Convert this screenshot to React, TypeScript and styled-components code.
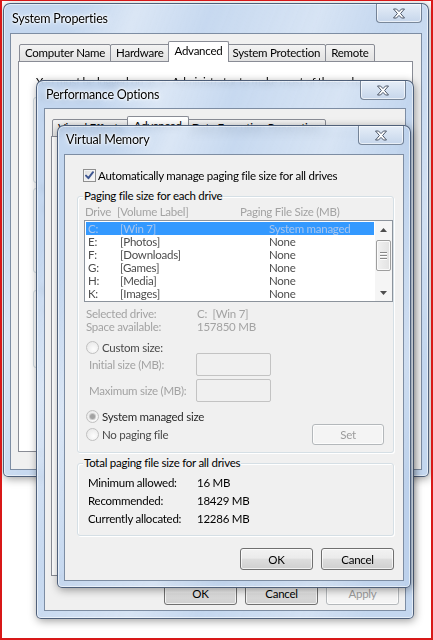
import React from "react";
import styled, { createGlobalStyle, css } from "styled-components";

const GlobalStyle = createGlobalStyle`
  html, body { margin: 0; padding: 0; background: #fff; }
  body {
    font-family: Lato, "Liberation Sans", Arial, sans-serif;
    font-size: 11.5px;
    letter-spacing: -0.25px;
    color: #000;
  }
  * { box-sizing: border-box; }
`;

const Desktop = styled.div`
  position: relative;
  width: 433px;
  height: 640px;
  overflow: hidden;
  background: #fff;
  border: 2px solid #d81818;
  border-top-width: 1px;
`;

/* ---------- window chrome ---------- */

const Frame = styled.div<{ $x: number; $y: number; $w: number; $h: number; $px: number }>`
  position: absolute;
  left: ${(p) => p.$x}px;
  top: ${(p) => p.$y}px;
  width: ${(p) => p.$w}px;
  height: ${(p) => p.$h}px;
  display: flex;
  flex-direction: column;
  padding: 0 ${(p) => p.$px}px ${(p) => p.$px}px;
  border: 1px solid rgba(50, 66, 92, 0.8);
  border-radius: 7px 7px 5px 5px;
  background:
    linear-gradient(112deg,
      rgba(255, 255, 255, 0) 12%,
      rgba(255, 255, 255, 0.38) 22%,
      rgba(255, 255, 255, 0.05) 34%,
      rgba(255, 255, 255, 0.32) 52%,
      rgba(255, 255, 255, 0) 64%,
      rgba(255, 255, 255, 0.25) 82%,
      rgba(255, 255, 255, 0) 92%),
    rgba(186, 208, 236, 0.86);
  backdrop-filter: blur(3px);
  box-shadow:
    inset 0 0 0 1px rgba(255, 255, 255, 0.55),
    1px 2px 8px rgba(0, 0, 0, 0.38);
`;

const TitleBar = styled.div<{ $h: number }>`
  flex: none;
  height: ${(p) => p.$h}px;
  display: flex;
  justify-content: space-between;
  align-items: flex-start;
`;

const Title = styled.span<{ $h: number }>`
  padding-left: 2px;
  line-height: ${(p) => p.$h}px;
  font-size: 12.5px;
  letter-spacing: -0.2px;
  color: #000;
  text-shadow: 0 0 6px #fff, 0 0 3px #fff, 0 0 2px #fff;
`;

const CloseButton = styled.div`
  width: 46px;
  height: 19px;
  display: flex;
  align-items: center;
  justify-content: center;
  border: 1px solid rgba(64, 80, 104, 0.65);
  border-top: none;
  border-radius: 0 0 4px 4px;
  background: linear-gradient(#e6eef8, #c6d6eb);
  box-shadow: inset 0 0 0 1px rgba(255, 255, 255, 0.6);
`;

const Client = styled.div<{ $pad: string }>`
  flex: 1;
  min-height: 0;
  display: flex;
  flex-direction: column;
  padding: ${(p) => p.$pad};
  background: #f0f0f0;
  border: 1px solid #7d8da3;
`;

const CloseGlyph = () => (
  <svg width="14" height="11" viewBox="0 0 14 11">
    <path
      d="M1.5 1 L4.5 1 L7 3.6 L9.5 1 L12.5 1 L8.6 5.5 L12.5 10 L9.5 10 L7 7.4 L4.5 10 L1.5 10 L5.4 5.5 Z"
      fill="#fff"
      stroke="#4b5668"
      strokeWidth="1"
      strokeLinejoin="round"
    />
  </svg>
);

type WinProps = {
  title: string;
  x: number;
  y: number;
  w: number;
  h: number;
  titleH: number;
  px: number;
  pad: string;
  children: React.ReactNode;
};

const Window = ({ title, x, y, w, h, titleH, px, pad, children }: WinProps) => (
  <Frame $x={x} $y={y} $w={w} $h={h} $px={px}>
    <TitleBar $h={titleH}>
      <Title $h={titleH}>{title}</Title>
      <CloseButton>
        <CloseGlyph />
      </CloseButton>
    </TitleBar>
    <Client $pad={pad}>{children}</Client>
  </Frame>
);

/* ---------- tabs ---------- */

const TabStrip = styled.div`
  position: relative;
  z-index: 1;
  flex: none;
  height: 20px;
  margin-bottom: -1px;
  padding-left: 2px;
  display: flex;
  align-items: flex-end;
`;

const Tab = styled.div<{ $active?: boolean }>`
  position: relative;
  height: 18px;
  padding: 0 5px;
  margin-left: -1px;
  line-height: 16px;
  white-space: nowrap;
  border: 1px solid #898c95;
  border-radius: 2px 2px 0 0;
  background: linear-gradient(#f3f3f3, #e2e2e2);
  ${(p) =>
    p.$active &&
    css`
      z-index: 2;
      height: 21px;
      margin: 0 -2px 0 -2px;
      padding: 0 6px;
      line-height: 17px;
      border-bottom: none;
      background: #fff;
    `}
`;

const TabPanel = styled.div`
  flex: 1;
  min-height: 0;
  display: flex;
  flex-direction: column;
  background: #fff;
  border: 1px solid #898c95;
  overflow: hidden;
`;

/* ---------- buttons ---------- */

const PushButton = styled.div<{ $w: number; $h: number; $disabled?: boolean }>`
  flex: none;
  width: ${(p) => p.$w}px;
  height: ${(p) => p.$h}px;
  display: flex;
  align-items: center;
  justify-content: center;
  border: 1px solid #707070;
  border-radius: 3px;
  color: #000;
  background: linear-gradient(#f2f2f2 0%, #ebebeb 45%, #dddddd 52%, #cfcfcf 100%);
  box-shadow: inset 0 0 0 1px rgba(255, 255, 255, 0.7);
  ${(p) =>
    p.$disabled &&
    css`
      border-color: #b4b8bb;
      color: #9c9c9c;
      background: #f4f4f4;
      box-shadow: inset 0 0 0 1px #fcfcfc;
    `}
`;

const ButtonRow = styled.div<{ $mt: number; $pr: number }>`
  flex: none;
  display: flex;
  justify-content: flex-end;
  gap: 8px;
  margin-top: ${(p) => p.$mt}px;
  padding-right: ${(p) => p.$pr}px;
`;

/* ---------- group boxes ---------- */

const GroupBox = styled.div<{ $mt: number; $h?: number; $pad: string }>`
  position: relative;
  flex: none;
  margin-top: ${(p) => p.$mt}px;
  ${(p) => (p.$h ? `height: ${p.$h}px;` : "")}
  padding: ${(p) => p.$pad};
  border: 1px solid #d5dfe5;
  border-radius: 3px;
  box-shadow: inset 1px 1px 0 #fff, 1px 1px 0 #fff;
`;

const GroupLabel = styled.span<{ $bg: string }>`
  position: absolute;
  top: -9px;
  left: 5px;
  padding: 0 1px;
  line-height: 15px;
  white-space: nowrap;
  background: ${(p) => p.$bg};
  color: #000;
`;

/* ---------- System Properties contents ---------- */

const SysBody = styled.div`
  display: flex;
  flex-direction: column;
  padding: 12px 8px 0 14px;
`;

const Note = styled.div`
  margin: 0 -6px 0 3px;
  line-height: 15px;
  white-space: nowrap;
  letter-spacing: -0.35px;
`;

const GroupText = styled.div`
  line-height: 15px;
`;

const GroupFoot = styled.div`
  display: flex;
  justify-content: flex-end;
  margin-top: 14px;
`;

/* ---------- Virtual Memory contents ---------- */

const CheckRow = styled.div`
  flex: none;
  display: flex;
  align-items: center;
  gap: 2px;
  height: 15px;
  margin: 13px 0 0 6px;
  line-height: 15px;
  white-space: nowrap;
`;

const CheckBox = styled.span`
  flex: none;
  width: 13px;
  height: 13px;
  display: flex;
  align-items: center;
  justify-content: center;
  border: 1px solid #8f8f8f;
  background: linear-gradient(135deg, #dcdcdc, #fbfbfb);
  box-shadow: inset 0 0 0 1px #f4f4f4;
`;

const ColumnHeader = styled.div`
  display: grid;
  grid-template-columns: 32px 123px auto;
  justify-items: start;
  height: 15px;
  margin-top: 7px;
  padding-left: 7px;
  line-height: 15px;
  color: #a3a3a3;
  white-space: nowrap;
`;

const ListBox = styled.div`
  display: flex;
  height: 82px;
  margin: 1px 0 0 6px;
  border: 1px solid #8c939c;
  background: #fff;
`;

const ListRows = styled.div`
  flex: 1;
  padding: 1px 1px 0 1px;
`;

const ListRow = styled.div<{ $selected?: boolean }>`
  display: grid;
  grid-template-columns: 32px 149px auto;
  justify-items: start;
  height: 13px;
  padding-left: 2px;
  line-height: 13px;
  white-space: nowrap;
  color: #4d4d4d;
  ${(p) =>
    p.$selected &&
    css`
      background: #3399ff;
      color: #a9c6ee;
    `}
`;

const ScrollBar = styled.div`
  flex: none;
  width: 17px;
  display: flex;
  flex-direction: column;
  background: #f5f5f5;
`;

const ArrowBox = styled.div`
  flex: none;
  height: 17px;
  display: flex;
  align-items: center;
  justify-content: center;
`;

const Track = styled.div`
  flex: 1;
  padding: 2px 1px 0;
`;

const Thumb = styled.div`
  height: 31px;
  display: flex;
  flex-direction: column;
  align-items: center;
  justify-content: center;
  gap: 2px;
  border: 1px solid #9e9e9e;
  border-radius: 2px;
  background: linear-gradient(90deg, #f1f1f1, #e2e2e2);
  box-shadow: inset 0 0 0 1px #fafafa;
`;

const Grip = styled.span`
  width: 7px;
  height: 1px;
  background: #8a8a8a;
  box-shadow: 0 1px 0 #fff;
`;

const InfoGrid = styled.div`
  display: grid;
  grid-template-columns: 111px auto;
  justify-items: start;
  margin: 5px 0 0 8px;
  line-height: 13px;
  color: #a3a3a3;
  white-space: nowrap;
`;

const RadioRow = styled.div<{ $mt: number; $color: string }>`
  display: flex;
  align-items: center;
  gap: 3px;
  height: 13px;
  margin: ${(p) => p.$mt}px 0 0 8px;
  line-height: 13px;
  white-space: nowrap;
  color: ${(p) => p.$color};
`;

const Radio = styled.span<{ $checked?: boolean }>`
  flex: none;
  width: 13px;
  height: 13px;
  display: flex;
  align-items: center;
  justify-content: center;
  border: 1px solid #c0c0c0;
  border-radius: 50%;
  background: radial-gradient(circle at 60% 65%, #fdfdfd, #e4e4e4);
  ${(p) =>
    p.$checked &&
    css`
      &::after {
        content: "";
        width: 5px;
        height: 5px;
        border-radius: 50%;
        background: #a2a2a2;
        box-shadow: 0 0 0 1px #c9c9c9;
      }
    `}
`;

const InputRow = styled.div<{ $mt: number }>`
  display: flex;
  align-items: center;
  margin: ${(p) => p.$mt}px 0 0 11px;
  color: #a3a3a3;
  white-space: nowrap;
`;

const InputLabel = styled.span`
  width: 107px;
`;

const TextBox = styled.span`
  width: 75px;
  height: 23px;
  border: 1px solid #c3c3c3;
  border-radius: 2px;
  background: #f0f0f0;
`;

const SetRow = styled.div`
  display: flex;
  align-items: center;
  justify-content: space-between;
  height: 21px;
  margin: 1px 9px 0 0;
`;

const TotalsGrid = styled.div`
  display: grid;
  grid-template-columns: 109px auto;
  justify-items: start;
  line-height: 18px;
  white-space: nowrap;
`;

const Tri = ({ up }: { up?: boolean }) => (
  <svg width="7" height="4" viewBox="0 0 7 4">
    <path d={up ? "M0 4 L3.5 0 L7 4 Z" : "M0 0 L7 0 L3.5 4 Z"} fill="#4e4e4e" />
  </svg>
);

const drives = [
  { d: "C:", l: "[Win 7]", s: "System managed" },
  { d: "E:", l: "[Photos]", s: "None" },
  { d: "F:", l: "[Downloads]", s: "None" },
  { d: "G:", l: "[Games]", s: "None" },
  { d: "H:", l: "[Media]", s: "None" },
  { d: "K:", l: "[Images]", s: "None" },
];

export default function App() {
  return (
    <>
      <GlobalStyle />
      <Desktop>
        <Window
          title="System Properties"
          x={1}
          y={2}
          w={426}
          h={474}
          titleH={29}
          px={6}
          pad="8px 8px 17px 7px"
        >
          <TabStrip>
            <Tab>Computer Name</Tab>
            <Tab>Hardware</Tab>
            <Tab $active>Advanced</Tab>
            <Tab>System Protection</Tab>
            <Tab>Remote</Tab>
          </TabStrip>
          <TabPanel>
            <SysBody>
              <Note>You must be logged on as an Administrator to make most of these changes.</Note>
              <GroupBox $mt={8} $h={86} $pad="12px 10px 0 10px">
                <GroupLabel $bg="#fff">Performance</GroupLabel>
                <GroupText>Visual effects, processor scheduling, memory usage, and virtual memory</GroupText>
                <GroupFoot>
                  <PushButton $w={73} $h={23}>Settings...</PushButton>
                </GroupFoot>
              </GroupBox>
              <GroupBox $mt={5} $h={85} $pad="12px 10px 0 10px">
                <GroupLabel $bg="#fff">User Profiles</GroupLabel>
                <GroupText>Desktop settings related to your logon</GroupText>
                <GroupFoot>
                  <PushButton $w={73} $h={23}>Settings...</PushButton>
                </GroupFoot>
              </GroupBox>
              <GroupBox $mt={17} $h={78} $pad="12px 10px 0 10px">
                <GroupLabel $bg="#fff">Startup and Recovery</GroupLabel>
                <GroupText>System startup, system failure, and debugging information</GroupText>
                <GroupFoot>
                  <PushButton $w={73} $h={23}>Settings...</PushButton>
                </GroupFoot>
              </GroupBox>
            </SysBody>
          </TabPanel>
        </Window>

        <Window
          title="Performance Options"
          x={34}
          y={79}
          w={378}
          h={539}
          titleH={27}
          px={7}
          pad="8px 5px 5px 6px"
        >
          <TabStrip>
            <Tab>Visual Effects</Tab>
            <Tab $active>Advanced</Tab>
            <Tab>Data Execution Prevention</Tab>
          </TabStrip>
          <TabPanel />
          <ButtonRow $mt={6} $pr={1}>
            <PushButton $w={73} $h={23}>OK</PushButton>
            <PushButton $w={73} $h={23}>Cancel</PushButton>
            <PushButton $w={73} $h={23} $disabled>
              Apply
            </PushButton>
          </ButtonRow>
        </Window>

        <Window
          title="Virtual Memory"
          x={55}
          y={124}
          w={354}
          h={463}
          titleH={28}
          px={6}
          pad="0 9px 0 12px"
        >
          <CheckRow>
            <CheckBox>
              <svg width="9" height="9" viewBox="0 0 9 9">
                <path
                  d="M1 4.6 L3.4 7.2 L8 1.2"
                  fill="none"
                  stroke="#3d5590"
                  strokeWidth="1.9"
                  strokeLinecap="round"
                  strokeLinejoin="round"
                />
              </svg>
            </CheckBox>
            Automatically manage paging file size for all drives
          </CheckRow>

          <GroupBox $mt={13} $pad="0 0 7px 0">
            <GroupLabel $bg="#f0f0f0">Paging file size for each drive</GroupLabel>
            <ColumnHeader>
              <span>Drive</span>
              <span>[Volume Label]</span>
              <span>Paging File Size (MB)</span>
            </ColumnHeader>
            <ListBox>
              <ListRows>
                {drives.map((r, i) => (
                  <ListRow key={r.d} $selected={i === 0}>
                    <span>{r.d}</span>
                    <span>{r.l}</span>
                    <span>{r.s}</span>
                  </ListRow>
                ))}
              </ListRows>
              <ScrollBar>
                <ArrowBox>
                  <Tri up />
                </ArrowBox>
                <Track>
                  <Thumb>
                    <Grip />
                    <Grip />
                    <Grip />
                  </Thumb>
                </Track>
                <ArrowBox>
                  <Tri />
                </ArrowBox>
              </ScrollBar>
            </ListBox>
            <InfoGrid>
              <span>Selected drive:</span>
              <span>C:&nbsp;&nbsp;[Win 7]</span>
              <span>Space available:</span>
              <span>157850 MB</span>
            </InfoGrid>
            <RadioRow $mt={8} $color="#4a4a4a">
              <Radio />
              Custom size:
            </RadioRow>
            <InputRow $mt={-1}>
              <InputLabel>Initial size (MB):</InputLabel>
              <TextBox />
            </InputRow>
            <InputRow $mt={3}>
              <InputLabel>Maximum size (MB):</InputLabel>
              <TextBox />
            </InputRow>
            <RadioRow $mt={8} $color="#2a2a2a">
              <Radio $checked />
              System managed size
            </RadioRow>
            <SetRow>
              <RadioRow $mt={0} $color="#4a4a4a">
                <Radio />
                No paging file
              </RadioRow>
              <PushButton $w={72} $h={21} $disabled>
                Set
              </PushButton>
            </SetRow>
          </GroupBox>

          <GroupBox $mt={10} $pad="10px 0 7px 10px">
            <GroupLabel $bg="#f0f0f0">Total paging file size for all drives</GroupLabel>
            <TotalsGrid>
              <span>Minimum allowed:</span>
              <span>16 MB</span>
              <span>Recommended:</span>
              <span>18429 MB</span>
              <span>Currently allocated:</span>
              <span>12286 MB</span>
            </TotalsGrid>
          </GroupBox>

          <ButtonRow $mt={12} $pr={0}>
            <PushButton $w={73} $h={22}>OK</PushButton>
            <PushButton $w={73} $h={22}>Cancel</PushButton>
          </ButtonRow>
        </Window>
      </Desktop>
    </>
  );
}
